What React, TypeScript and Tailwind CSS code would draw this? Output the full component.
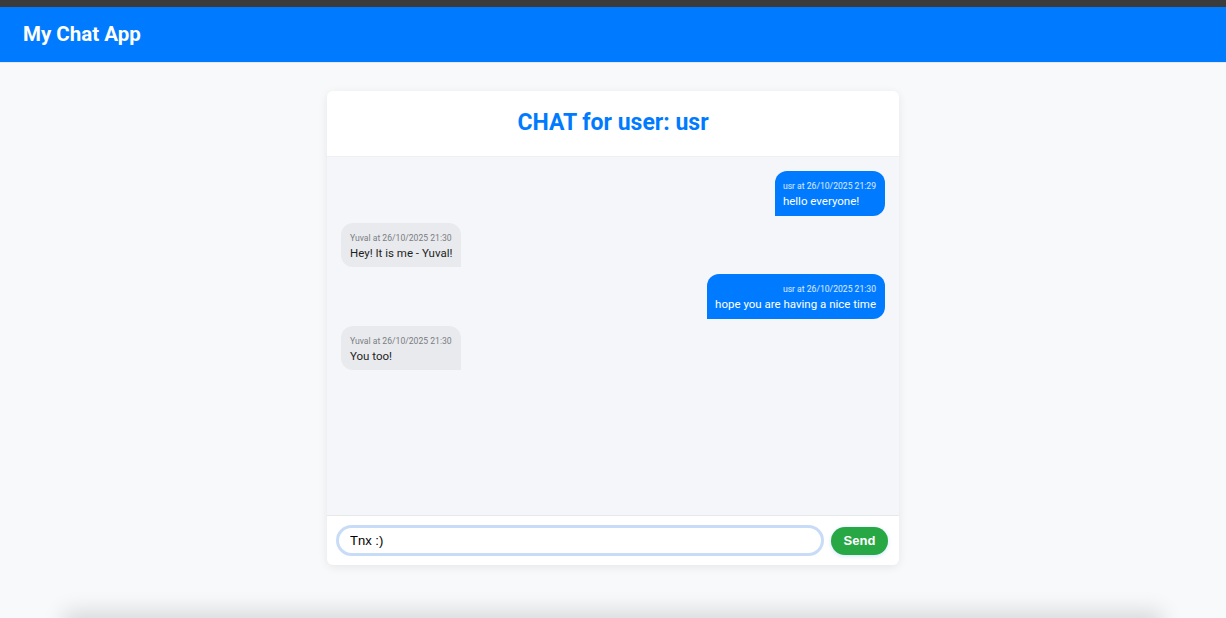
const messages = [
  { from: "usr", time: "26/10/2025 21:29", text: "hello everyone!", mine: true },
  { from: "Yuval", time: "26/10/2025 21:30", text: "Hey! It is me - Yuval!", mine: false },
  { from: "usr", time: "26/10/2025 21:30", text: "hope you are having a nice time", mine: true },
  { from: "Yuval", time: "26/10/2025 21:30", text: "You too!", mine: false },
];

function Bubble({ m }: { m: (typeof messages)[number] }) {
  return (
    <div className={m.mine ? "flex justify-end" : "flex justify-start"}>
      <div
        className={
          m.mine
            ? "bg-[#007bff] text-white rounded-[12px] rounded-bl-none pl-[8px] pr-[9px] pt-[9px] pb-[5.5px]"
            : "bg-[#e9eaee] text-[#1c1f23] rounded-[12px] rounded-br-none px-[9px] pt-[9px] pb-[5.5px]"
        }
      >
        <div
          className={
            m.mine
              ? "text-[8.6px] leading-[12px] text-white/85 text-right"
              : "text-[8.6px] leading-[12px] text-[#7a7d82]"
          }
        >
          {m.from} at {m.time}
        </div>
        <div className="text-[11.5px] leading-[17px] mt-[1px]">{m.text}</div>
      </div>
    </div>
  );
}

export default function App() {
  return (
    <div className="h-[618px] overflow-hidden bg-[#f8f9fa] font-['Roboto',sans-serif]">
      <div className="h-[618px] flex flex-col">
        <div className="h-[7px] bg-[#3b3b3b] shrink-0" />
        <header className="h-[56px] shrink-0 bg-[#007bff] px-[23px] flex items-center border-b border-[#e6e8eb]">
          <h1 className="text-white text-[20.5px] font-bold">My Chat App</h1>
        </header>
        <main className="flex justify-center pt-[28px]">
          <div className="w-[572px] h-[474px] bg-white rounded-[6px] shadow-[0_2px_10px_rgba(0,0,0,0.08)] flex flex-col overflow-hidden">
            <div className="h-[66px] shrink-0 flex items-center justify-center border-b border-[#eef0f2]">
              <h2 className="text-[#007bff] text-[23px] font-bold">CHAT for user: usr</h2>
            </div>
            <div className="flex-1 bg-[#f5f6fa] p-[14px] flex flex-col gap-[7px]">
              {messages.map((m, i) => (
                <Bubble m={m} key={i} />
              ))}
            </div>
            <div className="h-[50px] shrink-0 border-t border-[#e6e8eb] flex items-center pl-[9px] pr-[11px] gap-[7px]">
              <input
                defaultValue="Tnx :)"
                className="flex-1 h-[31px] rounded-full border-[3px] border-[#c9dcf7] bg-white px-[11px] text-[13px] text-black font-['Liberation_Sans',Arial,sans-serif] outline-none"
              />
              <button className="w-[57px] h-[28px] rounded-full bg-[#28a745] text-white text-[13px] font-bold font-['Liberation_Sans',Arial,sans-serif] shadow-[0_1px_4px_rgba(0,123,255,0.2)]">
                Send
              </button>
            </div>
          </div>
        </main>
      </div>
      <div className="h-[20px] mx-[70px] bg-white shadow-[0_0_22px_6px_rgba(0,0,0,0.14)]" />
    </div>
  );
}
